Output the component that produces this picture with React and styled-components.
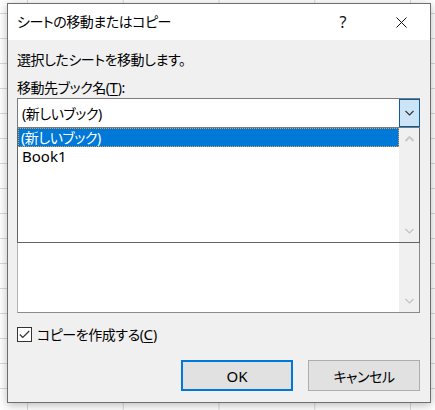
import React from "react";
import styled, { createGlobalStyle } from "styled-components";

const GlobalStyle = createGlobalStyle`
  html, body { margin: 0; padding: 0; }
  body {
    font-family: "Noto Sans", "Noto Sans CJK JP", sans-serif;
    font-feature-settings: "palt";
    font-size: 14px;
    letter-spacing: -0.45px;
    color: #000;
  }
  #root { width: 435px; height: 410px; overflow: hidden; }
`;

/* Spreadsheet cells peeking out behind the modal */
const Sheet = styled.div`
  width: 435px;
  height: 410px;
  box-sizing: border-box;
  padding: 3px 0 0 7px;
  background-color: #fff;
  background-image:
    linear-gradient(to right, #d9d9d9 1px, transparent 1px),
    linear-gradient(to bottom, #d9d9d9 1px, transparent 1px);
  background-size: 95.75px 25px;
  background-position: 27px 13px;
`;

const Dialog = styled.div`
  width: 424px;
  height: 400px;
  box-sizing: border-box;
  border: 1px solid #6e6e6e;
  background: #f0f0f0;
  box-shadow: 0 2px 9px rgba(0, 0, 0, 0.28);
  display: flex;
  flex-direction: column;
`;

const TitleBar = styled.div`
  height: 36px;
  flex: none;
  background: #fff;
  display: flex;
  align-items: center;
  padding-left: 9px;
`;

const Title = styled.div`
  flex: 1;
  line-height: 18px;
`;

const CaptionButton = styled.div`
  width: 58px;
  height: 36px;
  display: flex;
  align-items: center;
  justify-content: center;
  font-size: 16px;
  letter-spacing: 0;
  color: #111;
`;

const Body = styled.div`
  flex: 1;
  display: flex;
  flex-direction: column;
  padding: 11px 10px 11px 9px;
`;

const TextLine = styled.div`
  line-height: 18px;
  height: 18px;
  margin-bottom: ${(p) => p.$gap}px;
  white-space: nowrap;
`;

const Key = styled.span`
  text-decoration: underline;
  text-underline-offset: 2px;
  font-size: 15px;
  letter-spacing: 0;
`;

const ComboWrap = styled.div`
  position: relative;
  z-index: 2;
`;

const Combo = styled.div`
  height: 30px;
  box-sizing: border-box;
  border: 1px solid #7a7a7a;
  background: #fff;
  display: flex;
  align-items: stretch;
`;

const ComboText = styled.div`
  flex: 1;
  padding-left: 4px;
  display: flex;
  align-items: center;
`;

const DropButton = styled.div`
  width: 21px;
  box-sizing: border-box;
  margin-right: -1px;
  border: 1px solid #0f5a98;
  background: #cce4f7;
  display: flex;
  align-items: center;
  justify-content: center;
`;

/* Open drop-down list laid over the sheet list */
const Popup = styled.div`
  position: absolute;
  top: 100%;
  left: 0;
  right: 0;
  height: 115px;
  box-sizing: border-box;
  border: 1px solid #646464;
  border-top: none;
  background: #fff;
  display: flex;
`;

const Items = styled.div`
  flex: 1;
  display: flex;
  flex-direction: column;
`;

const Item = styled.div`
  height: 19px;
  line-height: 19px;
  padding-left: ${(p) => (p.$selected ? 3 : 4)}px;
  box-sizing: border-box;
  background: ${(p) => (p.$selected ? "#0078d7" : "transparent")};
  color: ${(p) => (p.$selected ? "#fff" : "#000")};
  outline: ${(p) => (p.$selected ? "1px dotted #e8a040" : "none")};
  outline-offset: -1px;
  white-space: nowrap;
  font-size: ${(p) => (p.$latin ? "15px" : "14px")};
  letter-spacing: ${(p) => (p.$latin ? "0" : "-0.45px")};
`;

const ScrollTrack = styled.div`
  width: 20px;
  background: #f0f0f0;
  display: flex;
  flex-direction: column;
  justify-content: ${(p) => (p.$onlyDown ? "flex-end" : "space-between")};
  align-items: center;
  padding: 8px 0;
  box-sizing: border-box;
`;

const SheetList = styled.div`
  height: 185px;
  box-sizing: border-box;
  border: 1px solid #8a8a8a;
  border-left-color: #b4b4b4;
  background: #fff;
  display: flex;
  justify-content: flex-end;
`;

const CheckRow = styled.label`
  margin-top: 13px;
  display: flex;
  align-items: center;
  gap: 5px;
  height: 16px;
`;

const CheckBox = styled.div`
  width: 15px;
  height: 15px;
  box-sizing: border-box;
  border: 1px solid #333;
  background: #fff;
  display: flex;
  align-items: center;
  justify-content: center;
`;

const ButtonRow = styled.div`
  margin-top: 18px;
  display: flex;
  justify-content: flex-end;
  gap: 15px;
`;

const Button = styled.div`
  width: ${(p) => p.$w}px;
  height: 31px;
  box-sizing: border-box;
  background: #e1e1e1;
  border: ${(p) => (p.$default ? "2px solid #0078d7" : "1px solid #adadad")};
  display: flex;
  align-items: center;
  justify-content: center;
  font-size: ${(p) => (p.$latin ? "15px" : "14px")};
  letter-spacing: ${(p) => (p.$latin ? "0" : "-0.45px")};
`;

const Chevron = ({ up, color = "#333", w = 9 }) => (
  <svg width={w} height="6" viewBox="0 0 9 6">
    <polyline
      points={up ? "0.5,5 4.5,1 8.5,5" : "0.5,1 4.5,5 8.5,1"}
      fill="none"
      stroke={color}
      strokeWidth={up ? 2 : 1.1}
    />
  </svg>
);

export default function App() {
  return (
    <>
      <GlobalStyle />
      <Sheet>
        <Dialog>
          <TitleBar>
            <Title>シートの移動またはコピー</Title>
            <CaptionButton>?</CaptionButton>
            <CaptionButton>
              <svg width="11" height="11" viewBox="0 0 11 11">
                <path d="M0.5 0.5 L10.5 10.5 M10.5 0.5 L0.5 10.5" stroke="#111" strokeWidth="1" />
              </svg>
            </CaptionButton>
          </TitleBar>
          <Body>
            <TextLine $gap={9}>選択したシートを移動します。</TextLine>
            <TextLine $gap={2}>
              移動先ブック名(<Key>T</Key>):
            </TextLine>
            <ComboWrap>
              <Combo>
                <ComboText>(新しいブック)</ComboText>
                <DropButton>
                  <Chevron />
                </DropButton>
              </Combo>
              <Popup>
                <Items>
                  <Item $selected>(新しいブック)</Item>
                  <Item $latin>Book1</Item>
                </Items>
                <ScrollTrack>
                  <Chevron up color="#c8c8c8" w={11} />
                  <Chevron color="#c0c0c0" w={11} />
                </ScrollTrack>
              </Popup>
            </ComboWrap>
            <SheetList>
              <ScrollTrack $onlyDown>
                <Chevron color="#c0c0c0" w={11} />
              </ScrollTrack>
            </SheetList>
            <CheckRow>
              <CheckBox>
                <svg width="11" height="9" viewBox="0 0 11 9">
                  <polyline points="0.8,4.5 3.8,7.5 10.2,1" fill="none" stroke="#333" strokeWidth="1.2" />
                </svg>
              </CheckBox>
              <span>
                コピーを作成する(<Key>C</Key>)
              </span>
            </CheckRow>
            <ButtonRow>
              <Button $default $latin $w={112}>OK</Button>
              <Button $w={112}>キャンセル</Button>
            </ButtonRow>
          </Body>
        </Dialog>
      </Sheet>
    </>
  );
}
